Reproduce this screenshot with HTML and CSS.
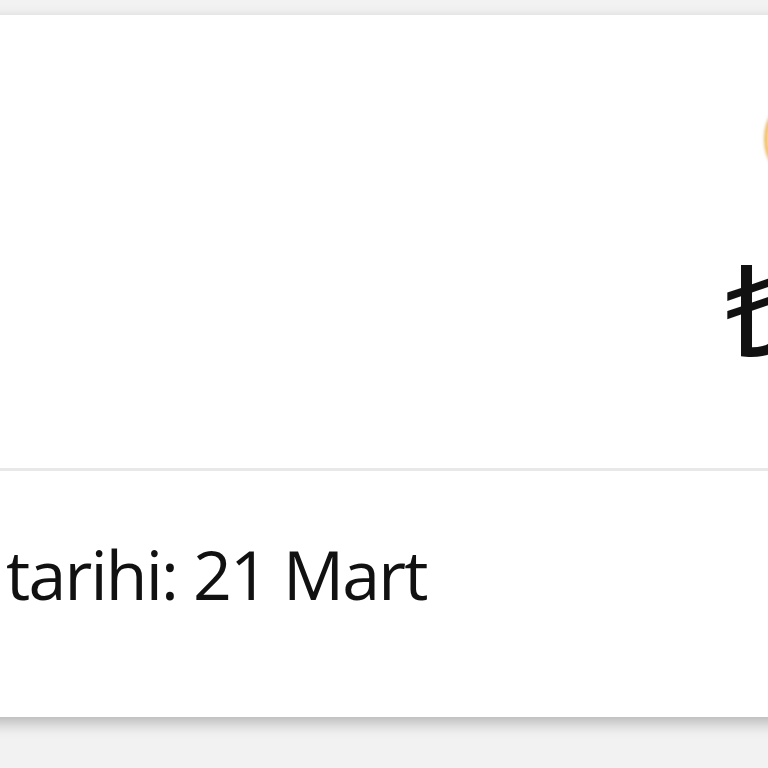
FILE: index.html
```html
<!DOCTYPE html>
<html lang="tr">
<head>
    <meta charset="UTF-8">
    <meta name="viewport" content="width=device-width, initial-scale=1.0">
    <title>Fatura</title>
    <link rel="stylesheet" href="styles.css">
</head>
<body>
    <div class="page">
        <main class="card">
            <section class="top">
                <span class="badge"></span>
                <h1 class="amount">₺</h1>
            </section>
            <section class="bottom">
                <p class="due">tarihi: 21 Mart</p>
            </section>
        </main>
    </div>
</body>
</html>
```

FILE: styles.css
```css
body {
    margin: 0;
    background: #f2f2f2;
    font-family: "Open Sans", "Noto Sans", sans-serif;
    color: #111;
}

.page {
    height: 100vh;
    padding-top: 15px;
    box-sizing: border-box;
    overflow: hidden;
}

.card {
    margin: 0 -60px 0 -20px;
    background: #fff;
    box-shadow: 0 6px 14px rgba(0, 0, 0, 0.25);
}

.top {
    height: 456px;
    border-bottom: 3px solid #e8e8e8;
    display: flex;
    flex-direction: column;
    align-items: flex-end;
    padding-right: 30px;
    box-sizing: border-box;
}

/* status ring, only its left rim shows */
.badge {
    margin-top: 75px;
    margin-right: -64px;
    width: 90px;
    height: 90px;
    border-radius: 50%;
    border: 4px solid #f0a830;
    filter: blur(1.5px);
    opacity: 0.8;
}

.amount {
    margin: 55px 0 0;
    font-size: 128px;
    font-weight: 400;
    line-height: 1;
}

.bottom {
    height: 246px;
    padding: 0 0 0 26px;
    box-sizing: border-box;
}

.due {
    margin: 0;
    padding-top: 69px;
    font-size: 68px;
    letter-spacing: -1.8px;
    line-height: 1;
}
```
